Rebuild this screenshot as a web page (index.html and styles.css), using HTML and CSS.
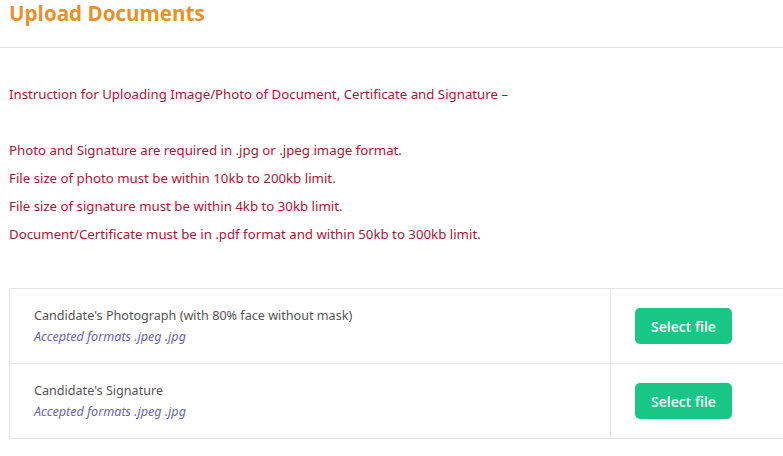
FILE: index.html
```html
<!DOCTYPE html>
<html>
<head>
<meta charset="utf-8">
<link rel="stylesheet" href="styles.css">
</head>
<body>
<header class="head">
  <h1 class="title">Upload Documents</h1>
</header>
<section class="instructions">
  <p class="intro">Instruction for Uploading Image/Photo of Document, Certificate and Signature –</p>
  <ul class="rules">
    <li>Photo and Signature are required in .jpg or .jpeg image format.</li>
    <li>File size of photo must be within 10kb to 200kb limit.</li>
    <li>File size of signature must be within 4kb to 30kb limit.</li>
    <li>Document/Certificate must be in .pdf format and within 50kb to 300kb limit.</li>
  </ul>
</section>
<div class="table">
  <div class="row">
    <div class="cell info">
      <div class="label">Candidate's Photograph (with 80% face without mask)</div>
      <div class="formats">Accepted formats .jpeg .jpg</div>
    </div>
    <div class="cell action"><button class="btn">Select file</button></div>
  </div>
  <div class="row">
    <div class="cell info">
      <div class="label">Candidate's Signature</div>
      <div class="formats">Accepted formats .jpeg .jpg</div>
    </div>
    <div class="cell action"><button class="btn">Select file</button></div>
  </div>
</div>
</body>
</html>
```
FILE: styles.css
```css
* { box-sizing: border-box; }
body {
  margin: 0;
  width: 783px;
  overflow: hidden;
  background: #fff;
  font-family: "Noto Sans", "Open Sans", sans-serif;
}
.head {
  height: 48px;
  border-bottom: 1px solid #e2e2e2;
  padding: 0 9px;
}
.title {
  margin: 0;
  padding-top: 0;
  font-family: "Open Sans", sans-serif;
  font-weight: 700;
  font-size: 20.6px;
  line-height: 27px;
  color: #e8912b;
}
.instructions {
  padding: 0 9px;
  color: #ad1637;
  font-size: 13.25px;
}
.intro {
  margin: 36px 0 0;
  line-height: 20px;
}
.rules {
  list-style: none;
  margin: 36px 0 0;
  padding: 0;
}
.rules li {
  line-height: 20px;
  margin-bottom: 8px;
}
.table {
  margin: 44px 0 0 9px;
  border-top: 1px solid #e6e6e6;
  border-left: 1px solid #e6e6e6;
}
.row {
  display: flex;
  height: 75px;
  border-bottom: 1px solid #e6e6e6;
}
.cell.info {
  width: 601px;
  border-right: 1px solid #e6e6e6;
  padding: 16px 0 0 24px;
}
.label {
  color: #555;
  font-size: 12.6px;
  line-height: 21px;
}
.formats {
  color: #6b63b8;
  font-style: italic;
  font-size: 12.6px;
  line-height: 21px;
}
.cell.action {
  flex: 1;
  padding: 19px 0 0 24px;
}
.btn {
  border: 0;
  background: #18c785;
  color: #fff;
  font-family: "Open Sans", sans-serif;
  font-weight: 600;
  font-size: 14px;
  width: 97px;
  height: 36px;
  border-radius: 5px;
}
```
